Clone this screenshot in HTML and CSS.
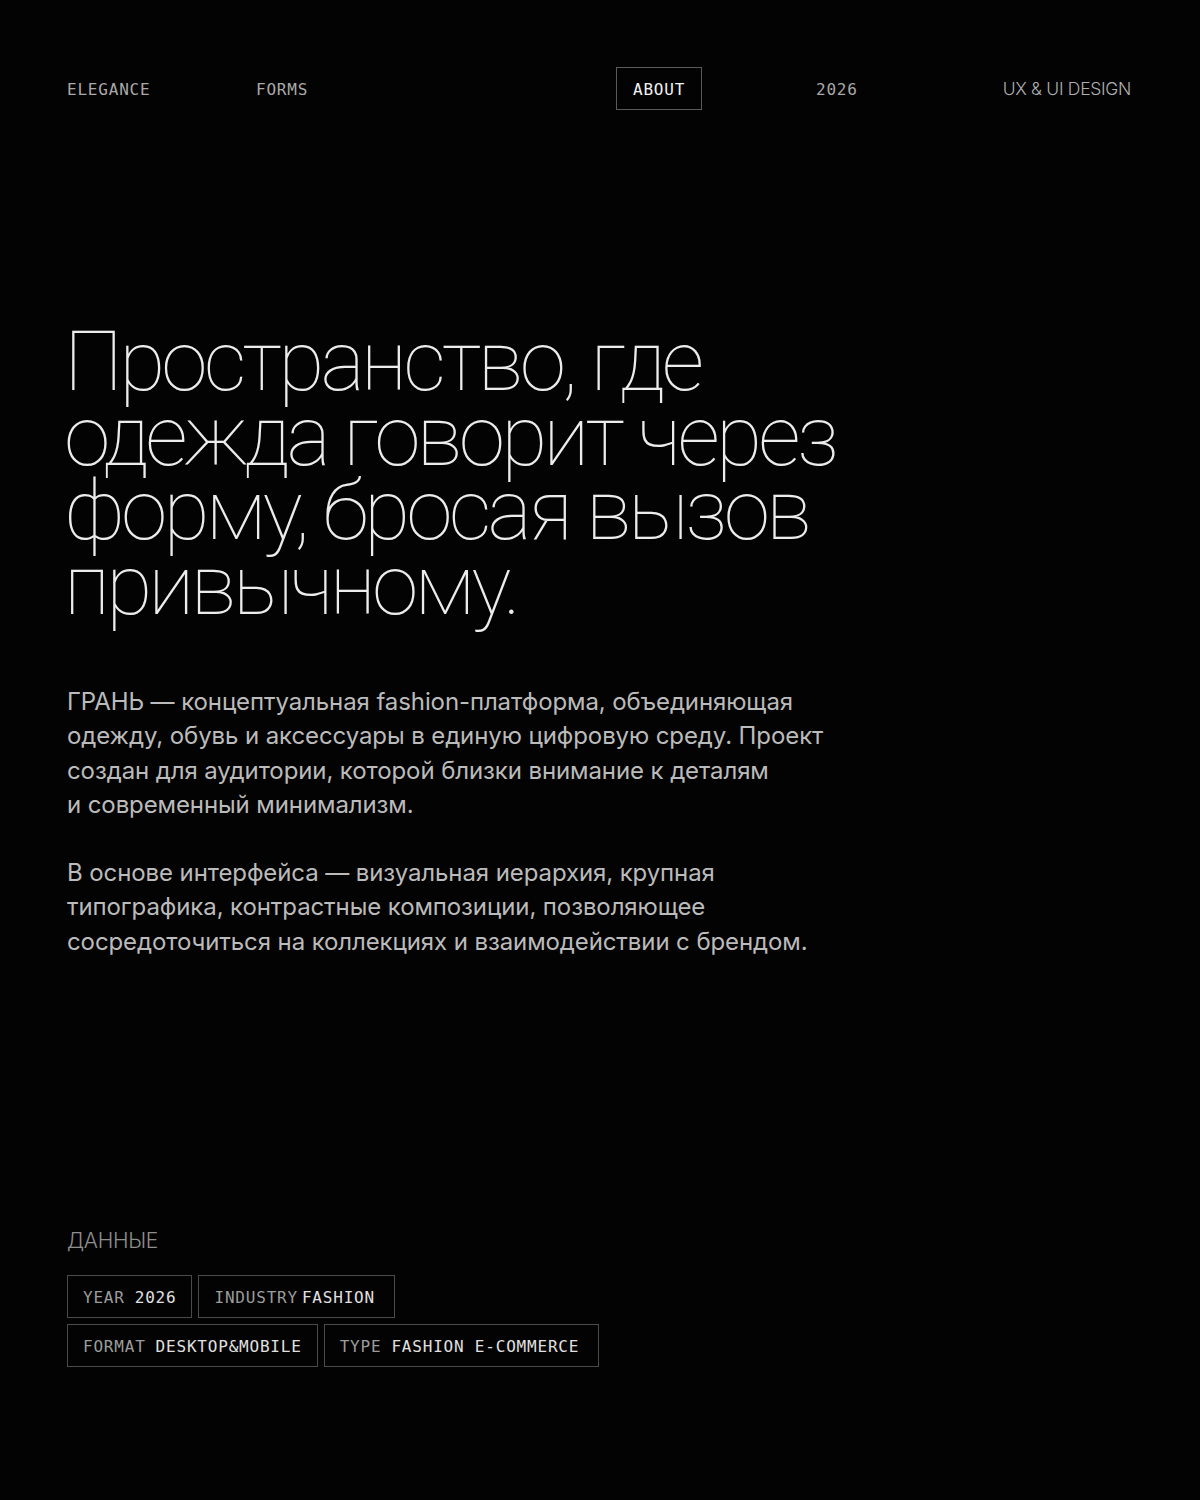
FILE: index.html
```html
<!DOCTYPE html>
<html lang="ru">
<head>
<meta charset="utf-8">
<title>ГРАНЬ — About</title>
<link rel="stylesheet" href="styles.css">
</head>
<body>
<div class="page">
  <header class="nav">
    <span class="nav-item mono">ELEGANCE</span>
    <span class="nav-item mono">FORMS</span>
    <span class="nav-item mono nav-active">ABOUT</span>
    <span class="nav-item mono">2026</span>
    <span class="nav-item nav-right">UX &amp; UI DESIGN</span>
  </header>

  <main class="hero">
    <h1 class="headline">Пространство, где<br>одежда говорит через<br>форму, бросая вызов<br>привычному.</h1>
    <div class="copy">
      <p>ГРАНЬ — концептуальная fashion-платформа, объединяющая<br>одежду, обувь и аксессуары в единую цифровую среду. Проект<br>создан для аудитории, которой близки внимание к деталям<br>и современный минимализм.</p>
      <p>В основе интерфейса — визуальная иерархия, крупная<br>типографика, контрастные композиции, позволяющее<br>сосредоточиться на коллекциях и взаимодействии с брендом.</p>
    </div>
  </main>

  <section class="data">
    <h2 class="data-title">ДАННЫЕ</h2>
    <div class="tags">
      <div class="tag-row">
        <span class="tag mono"><span class="tag-label">YEAR</span><span class="tag-value">2026</span></span>
        <span class="tag tag-wide mono"><span class="tag-label narrow">INDUSTRY</span><span class="tag-value">FASHION</span></span>
      </div>
      <div class="tag-row">
        <span class="tag mono"><span class="tag-label">FORMAT</span><span class="tag-value">DESKTOP&amp;MOBILE</span></span>
        <span class="tag tag-wide mono"><span class="tag-label">TYPE</span><span class="tag-value">FASHION E-COMMERCE</span></span>
      </div>
    </div>
  </section>
</div>
</body>
</html>
```

FILE: styles.css
```css
html, body {
  margin: 0;
  padding: 0;
  background: #030303;
}

body {
  font-family: Inter, "Liberation Sans", sans-serif;
  color: #e6e6e6;
  -webkit-font-smoothing: antialiased;
}

.page {
  width: 1200px;
  min-height: 1500px;
  box-sizing: border-box;
  padding: 67px 67px 0 67px;
}

.mono {
  font-family: "DejaVu Sans Mono", "Liberation Mono", monospace;
}

.nav {
  display: grid;
  grid-template-columns: 189px 360px 200px 1fr auto;
  align-items: center;
  height: 43px;
}

.nav-item {
  font-size: 16px;
  letter-spacing: 0.8px;
  color: #a9a9a9;
  line-height: 1;
  padding-top: 3px;
}

.nav-active {
  justify-self: start;
  box-sizing: border-box;
  height: 43px;
  padding: 3px 16px 0 16px;
  display: flex;
  align-items: center;
  border: 1px solid #5a5a5a;
  color: #f2f2f2;
}

.nav-right {
  justify-self: end;
  margin-right: 2px;
  padding-top: 0;
  font-family: Inter, "Liberation Sans", sans-serif;
  font-weight: 300;
  font-size: 17.5px;
  letter-spacing: -0.3px;
  color: #b0b0b0;
}

.hero {
  margin-top: 215px;
}

.headline {
  margin: 0;
  font-family: Roboto, Inter, sans-serif;
  font-weight: 100;
  font-size: 84px;
  line-height: 74.5px;
  letter-spacing: -3.8px;
  color: #ececec;
  margin-left: -3px;
}

.copy {
  margin-top: 62px;
}

.copy p {
  margin: 0 0 34px 0;
  font-size: 24px;
  line-height: 34.3px;
  font-weight: 400;
  letter-spacing: -0.1px;
  color: #bbbbbb;
}

.data {
  margin-top: 268px;
}

.data-title {
  margin: 0 0 20px 0;
  font-weight: 300;
  font-size: 21px;
  letter-spacing: -0.3px;
  line-height: 28px;
  color: #8e8e8e;
}

.tags {
  display: flex;
  flex-direction: column;
  gap: 6px;
}

.tag-row {
  display: flex;
  gap: 6px;
}

.tag {
  box-sizing: border-box;
  height: 43px;
  padding: 2px 15px 0 15px;
  display: flex;
  align-items: center;
  gap: 10px;
  border: 1px solid #4a4a4a;
  font-size: 16px;
  letter-spacing: 0.8px;
}

.tag-wide {
  padding-right: 19px;
}

.tag-label {
  color: #9c9c9c;
}

.tag-value {
  color: #e0e0e0;
}

.narrow {
  margin-right: -6px;
}
```
